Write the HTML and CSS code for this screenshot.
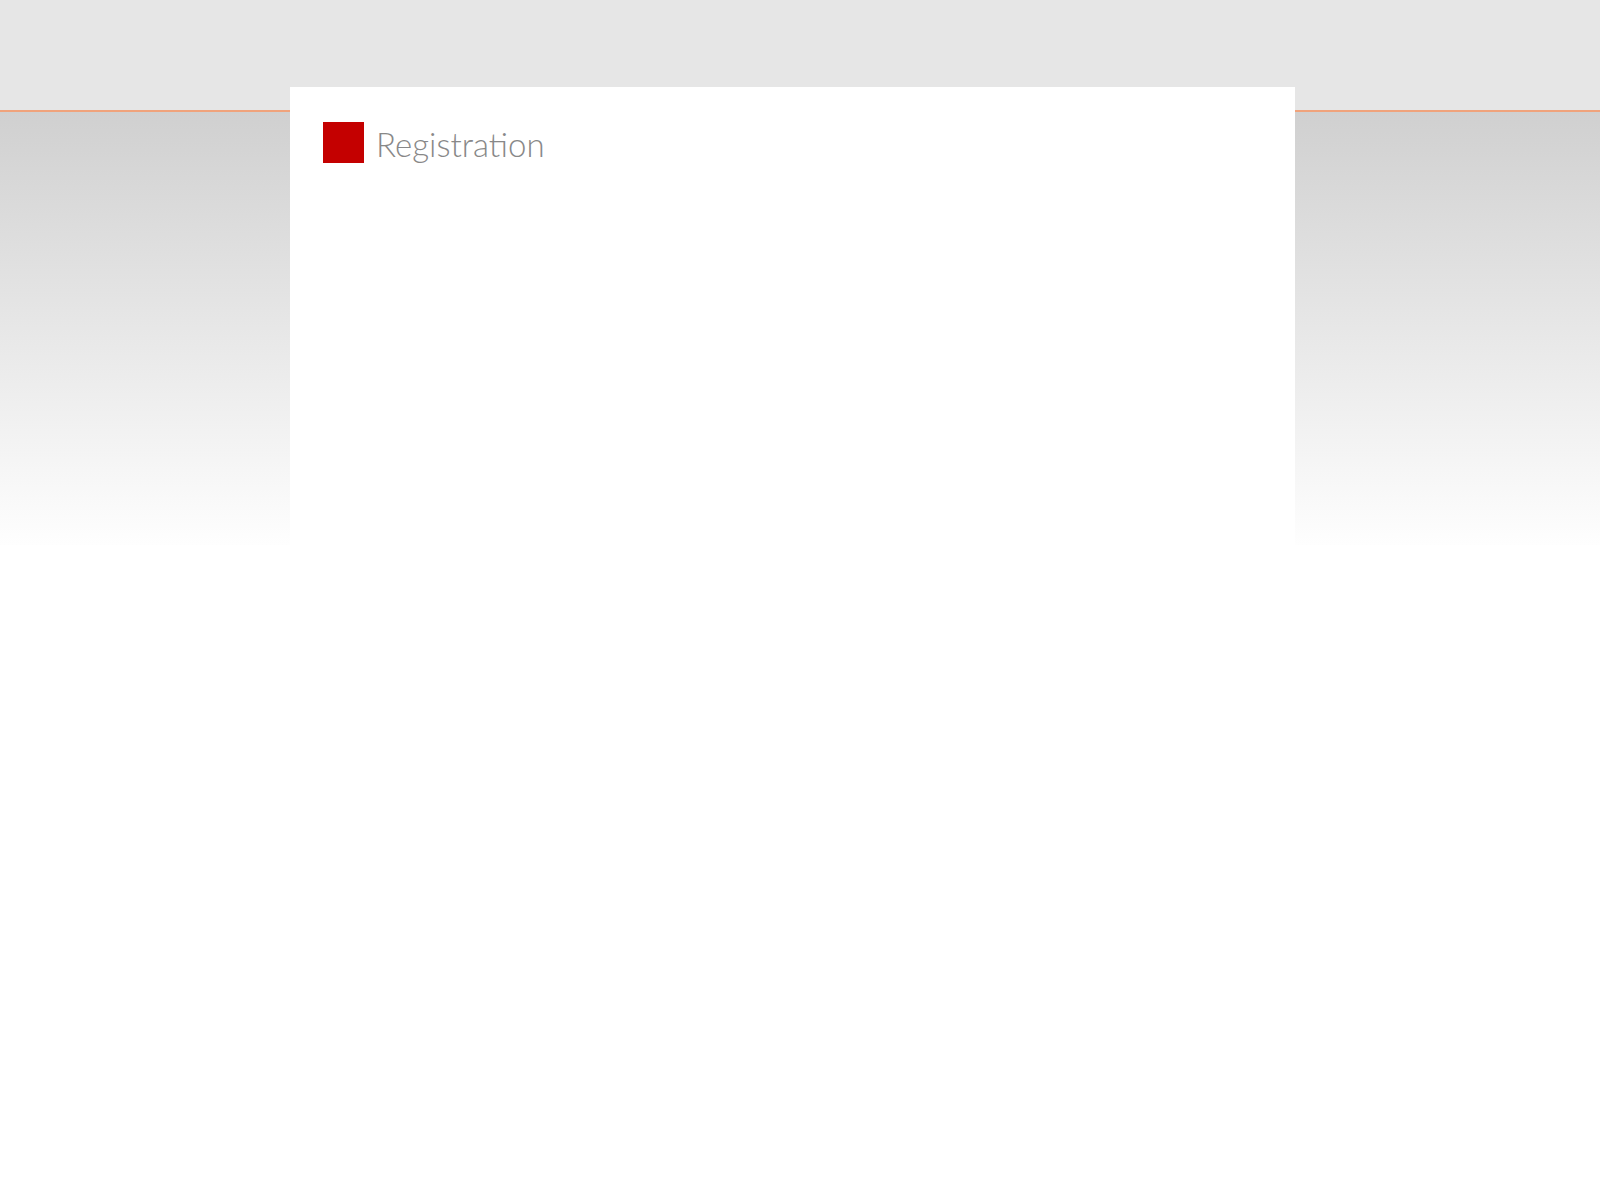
FILE: index.html
```html
<!DOCTYPE html>
<html>
<head>
<meta charset="utf-8">
<title>Registration</title>
<link rel="stylesheet" href="styles.css">
</head>
<body>
<main class="card">
  <h1 class="title"><span class="mark"></span><span class="title-text">Registration</span></h1>
</main>
</body>
</html>
```
FILE: styles.css
```css
html, body {
  margin: 0;
  padding: 0;
}
body {
  min-height: 1200px;
  background-color: #fff;
  background-image: linear-gradient(to bottom,
    #e6e6e6 0, #e6e6e6 110px,
    #f0a37c 110px, #f0a37c 112px,
    #d0d0d0 112px, #fefefe 545px, #fff 545px);
  background-repeat: no-repeat;
  font-family: "Lato", "Open Sans", sans-serif;
  overflow: hidden;
}
.card {
  width: 1005px;
  margin: 87px 0 0 290px;
  min-height: 1113px;
  background: #fff;
  box-sizing: border-box;
  padding: 35px 33px;
}
.title {
  margin: 0;
  display: flex;
  align-items: center;
  gap: 12px;
  height: 41px;
}
.mark {
  width: 41px;
  height: 41px;
  background: #c40000;
  flex: none;
}
.title-text {
  font-size: 33px;
  font-weight: 300;
  color: #888;
  line-height: 41px;
  position: relative;
  top: 2px;
}
```
